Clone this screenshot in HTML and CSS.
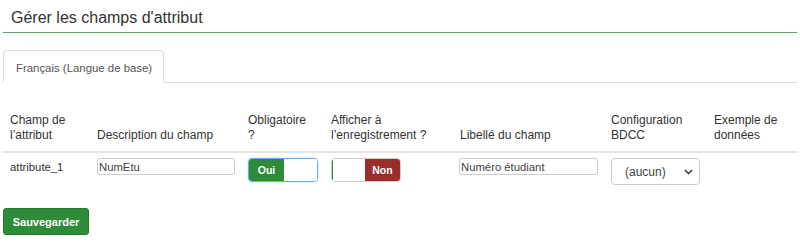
FILE: index.html
```html
<!DOCTYPE html>
<html lang="fr">
<head>
<meta charset="utf-8">
<link rel="stylesheet" href="styles.css">
</head>
<body>
<div class="page">
  <h1 class="title">Gérer les champs d'attribut</h1>
  <div class="tabs">
    <div class="tab active">Français (Langue de base)</div>
  </div>
  <table class="grid">
    <colgroup>
      <col class="c1"><col class="c2"><col class="c3"><col class="c4"><col class="c5"><col class="c6"><col class="c7">
    </colgroup>
    <thead>
      <tr>
        <th>Champ de<br>l’attribut</th>
        <th>Description du champ</th>
        <th>Obligatoire<br>?</th>
        <th>Afficher à<br>l’enregistrement ?</th>
        <th>Libellé du champ</th>
        <th>Configuration<br>BDCC</th>
        <th>Exemple de<br>données</th>
      </tr>
    </thead>
    <tbody>
      <tr>
        <td class="name">attribute_1</td>
        <td><input class="txt txt-desc" type="text" value="NumEtu"></td>
        <td>
          <div class="toggle on focus"><span class="knob-on">Oui</span><span class="blank"></span></div>
        </td>
        <td>
          <div class="toggle off"><span class="blank blank-l"></span><span class="knob-off">Non</span></div>
        </td>
        <td><input class="txt txt-label" type="text" value="Numéro étudiant"></td>
        <td>
          <div class="select"><span>(aucun)</span>
            <svg class="chev" width="9" height="6" viewBox="0 0 9 6"><path d="M1 1 L4.5 4.5 L8 1" fill="none" stroke="#444" stroke-width="1.6"/></svg>
          </div>
        </td>
        <td></td>
      </tr>
    </tbody>
  </table>
  <div class="actions">
    <button class="btn-save" type="button">Sauvegarder</button>
  </div>
</div>
</body>
</html>
```
FILE: styles.css
```css
* { box-sizing: border-box; }
html, body { margin: 0; padding: 0; background: #fff; }
body {
  font-family: "Liberation Sans", Arial, sans-serif;
  color: #333;
  font-size: 12px;
}
.page { padding: 0 3px; }
.title {
  margin: 0;
  font-weight: normal;
  font-size: 16px;
  line-height: 20px;
  padding: 8px 0 4px 8px;
  border-bottom: 1px solid #5fa55f;
  color: #333;
}
.tabs {
  margin-top: 17px;
  display: flex;
  border-bottom: 1px solid #ddd;
  height: 33px;
}
.tab {
  width: 161px;
  height: 33px;
  border: 1px solid #ddd;
  border-bottom-color: #fff;
  border-radius: 4px 4px 0 0;
  padding: 10px 0 0 12px;
  font-size: 11.4px;
  line-height: 14px;
  color: #555;
  background: #fff;
  margin-bottom: -1px;
}
.grid {
  margin-top: 25px;
  border-collapse: collapse;
  table-layout: fixed;
  width: 794px;
}
.c1 { width: 87px; } .c2 { width: 151px; } .c3 { width: 83px; } .c4 { width: 129px; }
.c5 { width: 151px; } .c6 { width: 103px; } .c7 { width: 90px; }
th {
  text-align: left;
  vertical-align: bottom;
  font-weight: normal;
  font-size: 12px;
  line-height: 15px;
  padding: 5px 7px 8px 7px;
  border-bottom: 2px solid #e5e5e5;
}
td {
  vertical-align: top;
  padding: 5px 7px 8px 7px;
  font-size: 11.3px;
}
td.name { padding-top: 7px; line-height: 14px; }
.txt {
  font-family: "Liberation Sans", Arial, sans-serif;
  font-size: 11.3px;
  color: #444;
  height: 17px;
  border: 1px solid #ccc;
  border-radius: 3px;
  padding: 0 1px;
  margin: 0;
  display: block;
  outline: none;
}
.txt-desc { width: 138px; }
.txt-label { width: 139px; margin-left: -1px; }
.toggle {
  width: 70px;
  height: 24px;
  display: flex;
  border: 1px solid #ccc;
  border-radius: 4px;
  overflow: hidden;
}
.toggle.focus { border-color: #66afe9; box-shadow: 0 0 2px rgba(102,175,233,.6); }
.knob-on, .knob-off {
  width: 35px;
  color: #fff;
  font-weight: bold;
  font-size: 10.5px;
  display: flex;
  align-items: center;
  justify-content: center;
}
.knob-on { background: #2e8b3a; }
.knob-off { background: #9b2d2a; }
.blank { flex: 1; background: #fff; }
.blank-l { border-left: 1px solid #2e8b3a; }
.select {
  width: 89px;
  height: 27px;
  border: 1px solid #ccc;
  border-radius: 4px;
  display: flex;
  align-items: center;
  justify-content: space-between;
  padding: 0 6px 0 13px;
  font-size: 12px;
  color: #444;
}
.actions { margin-top: 15px; }
.btn-save {
  font-family: "Liberation Sans", Arial, sans-serif;
  font-size: 11px;
  font-weight: bold;
  color: #fff;
  background: #2e8b3a;
  border: 1px solid #26782f;
  border-radius: 3px;
  width: 86px;
  height: 27px;
  padding: 0;
}
```
